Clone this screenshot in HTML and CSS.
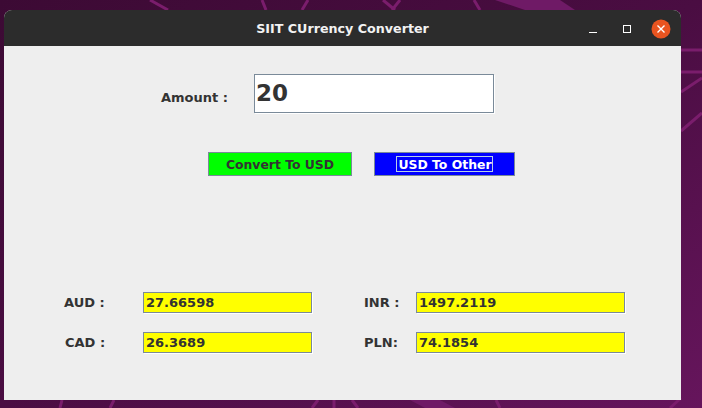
FILE: index.html
```html
<!DOCTYPE html>
<html>
<head>
<meta charset="utf-8">
<title>SIIT CUrrency Converter</title>
<link rel="stylesheet" href="styles.css">
</head>
<body>
<svg class="wallpaper" width="702" height="408" viewBox="0 0 702 408">
  <defs>
    <linearGradient id="bg" x1="0" y1="0" x2="1" y2="1">
      <stop offset="0" stop-color="#3c0a34"/>
      <stop offset="0.5" stop-color="#4a0d42"/>
      <stop offset="1" stop-color="#66155c"/>
    </linearGradient>
  </defs>
  <rect width="702" height="408" fill="url(#bg)"/>
  <g stroke="#7a1d6c" stroke-width="3" fill="none">
    <line x1="150" y1="0" x2="168" y2="10"/>
    <line x1="262" y1="0" x2="266" y2="10"/>
    <line x1="308" y1="0" x2="302" y2="10"/>
    <line x1="383" y1="0" x2="395" y2="10"/>
    <line x1="400" y1="0" x2="392" y2="10"/>
    <line x1="474" y1="0" x2="480" y2="10"/>
    <line x1="681" y1="50" x2="702" y2="50"/>
    <line x1="681" y1="72" x2="702" y2="72"/>
    <line x1="681" y1="92" x2="702" y2="78"/>
    <line x1="681" y1="131" x2="702" y2="113"/>
    <line x1="60" y1="408" x2="62" y2="400"/>
    <line x1="110" y1="408" x2="114" y2="400"/>
    <line x1="312" y1="408" x2="318" y2="400"/>
    <line x1="334" y1="408" x2="334" y2="400"/>
    <line x1="358" y1="408" x2="352" y2="400"/>
    <line x1="500" y1="408" x2="496" y2="400"/>
    <line x1="670" y1="408" x2="681" y2="398"/>
  </g>
  <polygon points="495,0 560,0 575,10 525,10" fill="#6f1a66"/>
  <polygon points="410,400 440,400 455,408 425,408" fill="#6f1a66"/>
</svg>

<div class="window">
  <div class="titlebar">
    <div></div>
    <div class="title">SIIT CUrrency Converter</div>
    <div class="controls">
      <span class="ctl">
        <svg width="20" height="20" viewBox="0 0 20 20"><line x1="6" y1="13.5" x2="14" y2="13.5" stroke="#fff" stroke-width="1"/></svg>
      </span>
      <span class="ctl">
        <svg width="20" height="20" viewBox="0 0 20 20"><rect x="6.5" y="6.5" width="7" height="7" fill="none" stroke="#fff" stroke-width="1"/></svg>
      </span>
      <span class="ctl">
        <svg width="20" height="20" viewBox="0 0 20 20"><circle cx="10" cy="10" r="9.5" fill="#e95420"/><path d="M6.5 6.5 L13.5 13.5 M13.5 6.5 L6.5 13.5" stroke="#fff" stroke-width="1.4"/></svg>
      </span>
    </div>
  </div>
  <div class="content">
    <div class="row amount-row">
      <label class="lbl amount-lbl">Amount :</label>
      <div class="field amount-field">20</div>
    </div>
    <div class="row button-row">
      <div class="btn btn-green">Convert To USD</div>
      <div class="btn btn-blue"><span class="focus">USD To Other</span></div>
    </div>
    <div class="row result-row first">
      <label class="lbl lbl-left">AUD :</label>
      <div class="field out out-left">27.66598</div>
      <label class="lbl lbl-right">INR :</label>
      <div class="field out out-right">1497.2119</div>
    </div>
    <div class="row result-row second">
      <label class="lbl lbl-left cad">CAD :</label>
      <div class="field out out-left">26.3689</div>
      <label class="lbl lbl-right">PLN:</label>
      <div class="field out out-right">74.1854</div>
    </div>
  </div>
</div>
</body>
</html>
```

FILE: styles.css
```css
html, body {
  margin: 0;
  padding: 0;
  width: 702px;
  height: 408px;
  overflow: hidden;
  background: #4a0d42;
}

body {
  position: relative;
  font-family: "DejaVu Sans", "Liberation Sans", sans-serif;
}

.wallpaper {
  position: absolute;
  left: 0;
  top: 0;
  display: block;
}

.window {
  position: absolute;
  left: 4px;
  top: 10px;
  width: 677px;
  height: 390px;
  background: #eeeeee;
  border-radius: 8px 8px 0 0;
  overflow: hidden;
}

.titlebar {
  height: 36px;
  background: #2c2c2c;
  display: grid;
  grid-template-columns: 1fr auto 1fr;
  align-items: center;
}

.title {
  color: #f2f2f2;
  font-family: "DejaVu Sans", sans-serif;
  font-weight: bold;
  font-size: 12.7px;
  padding-top: 1px;
}

.controls {
  display: flex;
  justify-content: flex-end;
  gap: 14px;
  padding-right: 10px;
  padding-top: 1px;
}

.ctl {
  width: 20px;
  height: 20px;
  display: block;
}

.ctl svg {
  display: block;
}

.content {
  display: flex;
  flex-direction: column;
}

.row {
  display: flex;
  align-items: center;
}

.lbl {
  color: #333333;
  font-weight: bold;
  font-size: 13px;
  white-space: nowrap;
}

.field {
  box-sizing: border-box;
  border: 1px solid #7a8a99;
  box-shadow: 1px 1px 0 #ffffff;
  color: #333333;
  font-weight: bold;
  white-space: nowrap;
  display: flex;
  align-items: center;
}

.amount-row {
  margin-top: 28px;
  height: 39px;
  padding-left: 157px;
}

.amount-lbl {
  width: 93px;
  margin-top: 8px;
}

.amount-field {
  width: 240px;
  height: 39px;
  background: #ffffff;
  font-size: 23px;
  padding-left: 1px;
  padding-bottom: 2px;
}

.button-row {
  margin-top: 39px;
  height: 24px;
  padding-left: 204px;
  gap: 22px;
}

.btn {
  box-sizing: border-box;
  height: 24px;
  border: 1px solid #7a8a99;
  font-weight: bold;
  font-size: 12.4px;
  display: flex;
  align-items: center;
  justify-content: center;
}

.btn-green {
  width: 144px;
  background: #00ff00;
  color: #333333;
}

.btn-blue {
  width: 141px;
  background: #0000ff;
  color: #ffffff;
}

.focus {
  border: 1px solid #b8cfe5;
  padding: 0 0 0 1px;
  height: 16px;
  line-height: 15px;
  box-sizing: border-box;
}

.result-row {
  height: 21px;
  padding-left: 60px;
}

.result-row.first {
  margin-top: 116px;
}

.result-row.second {
  margin-top: 19px;
}

.lbl-left {
  width: 79px;
}

.cad {
  padding-left: 1px;
  width: 78px;
}

.lbl-right {
  width: 52px;
  margin-left: 52px;
}

.out {
  height: 21px;
  background: #ffff00;
  font-size: 13px;
  padding-left: 2px;
}

.out-left {
  width: 169px;
}

.out-right {
  width: 209px;
}
```
